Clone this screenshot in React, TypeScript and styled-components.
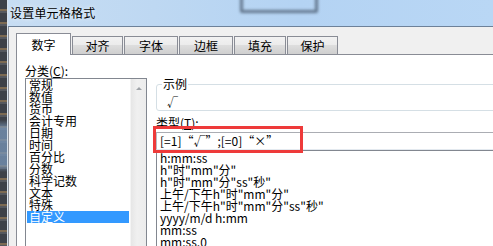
import React from 'react';
import styled, { createGlobalStyle } from 'styled-components';

const Global = createGlobalStyle`
  html, body { margin: 0; padding: 0; background: #f0f0f0; }
  body {
    font-family: "Noto Sans CJK SC", "Noto Sans", sans-serif;
    font-size: 12px;
    color: #000;
  }
  * { box-sizing: border-box; }
`;

const Window = styled.div`
  width: 493px;
  height: 246px;
  overflow: hidden;
  display: flex;
  background: #f0f0f0;
`;

const Strip = styled.div`
  flex: none;
  width: 7px;
  background:
    linear-gradient(180deg, transparent 0 120px, rgba(120, 150, 185, 0.75) 128px 165px, transparent 172px),
    repeating-linear-gradient(180deg, #3d4148 0 9px, #7c6a52 9px 11px, #55585e 11px 13px);
`;

const Main = styled.div`
  flex: 1;
  min-width: 0;
  display: flex;
  flex-direction: column;
  border-left: 1px solid #d8e2ec;
`;

const TitleBar = styled.div`
  position: relative;
  flex: none;
  height: 27px;
  border-bottom: 1px solid #6d8199;
  background: linear-gradient(90deg, #c7ddf3 0%, #bed8f2 30%, #b4d3f3 60%, #b9d7f5 100%);
  display: flex;
  align-items: center;
  padding-left: 2px;
  overflow: hidden;
`;

const Ghost = styled.div`
  position: absolute;
  left: 232px;
  top: -8px;
  width: 78px;
  height: 21px;
  border: 3px solid rgba(70, 85, 105, 0.75);
  border-radius: 2px;
  filter: blur(1.6px);
`;

const Title = styled.span`
  position: relative;
  line-height: 14px;
  letter-spacing: 0.2px;
  text-shadow: 0 0 4px rgba(255, 255, 255, 0.9);
`;

const Client = styled.div`
  flex: 1;
  min-height: 0;
  display: flex;
  flex-direction: column;
  border-left: 1px solid #8a8f98;
  padding: 6px 0 0 7px;
  background: #f0f0f0;
`;

const TabStrip = styled.div`
  flex: none;
  height: 21px;
  display: flex;
  align-items: flex-end;
  gap: 1px;
`;

const Tab = styled.div<{ $active?: boolean; $w: number }>`
  position: relative;
  z-index: ${(p) => (p.$active ? 1 : 0)};
  width: ${(p) => p.$w}px;
  height: ${(p) => (p.$active ? 22 : 18)}px;
  margin-bottom: ${(p) => (p.$active ? -1 : 0)}px;
  border: 1px solid #898c95;
  border-bottom: none;
  background: ${(p) =>
    p.$active
      ? '#fff'
      : 'linear-gradient(180deg, #f2f2f2 0%, #ebebeb 50%, #dddddd 50%, #cfcfcf 100%)'};
  display: flex;
  align-items: center;
  justify-content: center;
  line-height: 12px;
`;

const Panel = styled.div`
  flex: 1;
  min-height: 0;
  display: flex;
  gap: 9px;
  padding-left: 8px;
  background: #fff;
  border-top: 1px solid #898c95;
  border-left: 1px solid #898c95;
`;

const LeftCol = styled.div`
  flex: none;
  width: 122px;
  padding-top: 10px;
  display: flex;
  flex-direction: column;
`;

const Label = styled.div`
  line-height: 12px;
  height: 12px;
  margin-bottom: 1px;
  white-space: nowrap;
`;

const ListBox = styled.div`
  flex: none;
  height: 190px;
  display: flex;
  border: 1px solid #828790;
`;

const Items = styled.div`
  flex: 1;
  padding: 0 1px;
  display: flex;
  flex-direction: column;
`;

const Item = styled.div<{ $selected?: boolean }>`
  height: 12px;
  line-height: 12px;
  padding-left: 2px;
  white-space: nowrap;
  background: ${(p) => (p.$selected ? '#3399ff' : 'transparent')};
  color: ${(p) => (p.$selected ? '#fff' : '#000')};
`;

const Scrollbar = styled.div`
  flex: none;
  width: 16px;
  background: linear-gradient(90deg, #e6e6e6 0%, #f0f0f0 40%, #ececec 100%);
  border-left: 1px solid #f4f4f4;
`;

const ScrollArrow = styled.div`
  height: 17px;
  display: flex;
  justify-content: center;
  padding-top: 8px;
  &::before {
    content: '';
    width: 0;
    height: 0;
    border-left: 3px solid transparent;
    border-right: 3px solid transparent;
    border-bottom: 3px solid #9fa3a8;
  }
`;

const RightCol = styled.div`
  flex: none;
  width: 350px;
  padding-top: 22px;
  display: flex;
  flex-direction: column;
`;

const GroupBox = styled.fieldset`
  margin: 0;
  min-inline-size: 0;
  padding: 5px 8px 2px 9px;
  border: 1px solid #d5dfe5;
  border-radius: 3px;
`;

const Legend = styled.legend`
  padding: 0 1px;
  margin-left: -4px;
  font-size: 12px;
  line-height: 14px;
`;

const Sample = styled.div`
  line-height: 12px;
  height: 12px;
  padding-left: 1px;
  font-size: 11px;
`;

const TypeLabel = styled.div`
  margin-top: 6px;
  margin-bottom: 3px;
  line-height: 12px;
  height: 12px;
`;

const InputWrap = styled.div`
  position: relative;
  flex: none;
`;

const Input = styled.div`
  height: 18px;
  border: 1px solid;
  border-color: #abadb3 #dbdfe6 #e3e9ef #b9bcc3;
  padding-left: 3px;
  line-height: 16px;
  white-space: nowrap;
`;

const RedMark = styled.div`
  position: absolute;
  left: -3px;
  top: -6px;
  width: 150px;
  height: 27px;
  border: 3px solid #ee3a3a;
  pointer-events: none;
`;

const FormatList = styled.div`
  flex: none;
  height: 120px;
  padding-top: 1px;
  border: 1px solid #828790;
  border-right: none;
  display: flex;
  flex-direction: column;
`;

const FormatItem = styled.div`
  height: 12px;
  line-height: 12px;
  padding-left: 3px;
  white-space: nowrap;
`;

const tabs = [
  { label: '数字', w: 55, active: true },
  { label: '对齐', w: 51 },
  { label: '字体', w: 54 },
  { label: '边框', w: 54 },
  { label: '填充', w: 52 },
  { label: '保护', w: 51 },
];

const categories = [
  '常规', '数值', '货币', '会计专用', '日期', '时间',
  '百分比', '分数', '科学记数', '文本', '特殊', '自定义',
];

const formats = [
  'h:mm:ss',
  'h"时"mm"分"',
  'h"时"mm"分"ss"秒"',
  '上午/下午h"时"mm"分"',
  '上午/下午h"时"mm"分"ss"秒"',
  'yyyy/m/d h:mm',
  'mm:ss',
  'mm:ss.0',
];

export default function App() {
  return (
    <>
      <Global />
      <Window>
        <Strip />
        <Main>
          <TitleBar>
            <Ghost />
            <Title>设置单元格格式</Title>
          </TitleBar>
          <Client>
            <TabStrip>
              {tabs.map((t) => (
                <Tab key={t.label} $active={t.active} $w={t.w}>
                  {t.label}
                </Tab>
              ))}
            </TabStrip>
            <Panel>
              <LeftCol>
                <Label>
                  分类(<u>C</u>):
                </Label>
                <ListBox>
                  <Items>
                    {categories.map((c) => (
                      <Item key={c} $selected={c === '自定义'}>
                        {c}
                      </Item>
                    ))}
                  </Items>
                  <Scrollbar>
                    <ScrollArrow />
                  </Scrollbar>
                </ListBox>
              </LeftCol>
              <RightCol>
                <GroupBox>
                  <Legend>示例</Legend>
                  <Sample>√</Sample>
                </GroupBox>
                <TypeLabel>
                  类型(<u>T</u>):
                </TypeLabel>
                <InputWrap>
                  <Input>[=1]“√”;[=0]“×”</Input>
                  <RedMark />
                </InputWrap>
                <FormatList>
                  {formats.map((f) => (
                    <FormatItem key={f}>{f}</FormatItem>
                  ))}
                </FormatList>
              </RightCol>
            </Panel>
          </Client>
        </Main>
      </Window>
    </>
  );
}
